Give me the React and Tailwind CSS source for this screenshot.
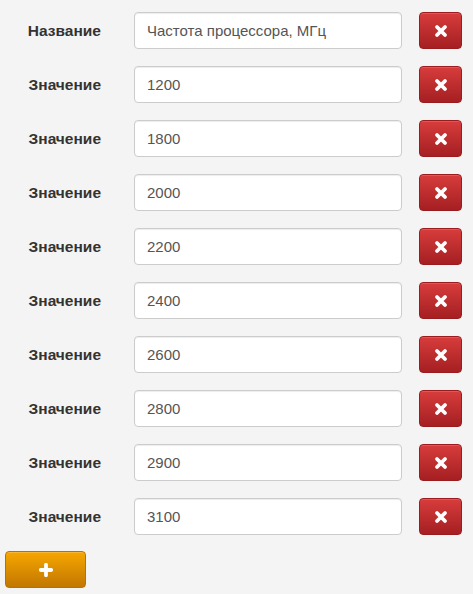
import React from "react";

const rows = [
  { label: "Название", value: "Частота процессора, МГц" },
  ...["1200", "1800", "2000", "2200", "2400", "2600", "2800", "2900", "3100"].map((v) => ({
    label: "Значение",
    value: v,
  })),
];

const CrossIcon = () => (
  <svg width="14" height="14" viewBox="0 0 14 14" className="block">
    <path d="M3 3 L11 11 M11 3 L3 11" stroke="#fff" strokeWidth="3.8" strokeLinecap="round" />
  </svg>
);

const PlusIcon = () => (
  <svg width="14" height="14" viewBox="0 0 14 14" className="block">
    <path d="M7 1.8 V12.2 M1.8 7 H12.2" stroke="#fff" strokeWidth="3.8" strokeLinecap="round" />
  </svg>
);

export default function App() {
  return (
    <div className="min-h-[594px] w-[473px] bg-[#f4f4f4] pt-3 font-['Liberation_Sans',Arial,sans-serif]">
      <div className="flex flex-col gap-[17px]">
        {rows.map((row, i) => (
          <div key={i} className="flex items-center">
            <label className="w-[101px] text-right text-[15.5px] font-bold text-[#333]">{row.label}</label>
            <input
              type="text"
              defaultValue={row.value}
              className="ml-[33px] h-[37px] w-[268px] rounded-[4px] border border-[#cccccc] bg-white px-[12px] text-[15px] text-[#555] shadow-[inset_0_1px_1px_rgba(0,0,0,0.075)] outline-none"
            />
            <button
              type="button"
              className="ml-[17px] flex h-[37px] w-[43px] items-center justify-center rounded-[4px] border border-[#9b1c1f] bg-gradient-to-b from-[#d83c3c] to-[#a51f22] shadow-[inset_0_1px_0_rgba(255,255,255,0.15)]"
            >
              <CrossIcon />
            </button>
          </div>
        ))}
      </div>
      <button
        type="button"
        className="ml-[5px] mt-[16px] flex h-[37px] w-[81px] items-center justify-center rounded-[4px] border border-[#b77200] bg-gradient-to-b from-[#f6a700] to-[#c27700] shadow-[inset_0_1px_0_rgba(255,255,255,0.2)]"
      >
        <PlusIcon />
      </button>
    </div>
  );
}
